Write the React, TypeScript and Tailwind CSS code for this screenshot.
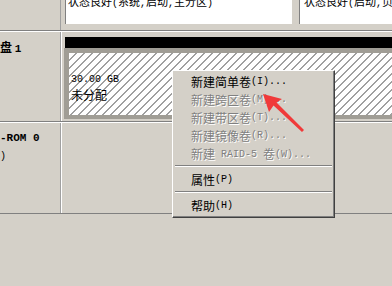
import React from "react";

const M = ({ children }: { children: React.ReactNode }) => (
  <span className="font-['Liberation_Mono',monospace] text-[10px]">{children}</span>
);

const Item = ({ label, hot, tail, disabled }: { label: string; hot: string; tail?: string; disabled?: boolean }) => (
  <div
    className={
      "h-[18px] pl-[18px] flex items-center whitespace-nowrap leading-[18px] " +
      (disabled ? "text-[#808080] [text-shadow:1px_1px_0_#ffffff]" : "text-black")
    }
  >
    <span>{label}</span>
    <M>({hot}){tail ?? ""}</M>
  </div>
);

const Sep = () => (
  <div className="h-[8px] pt-[2px] mx-[2px]">
    <div className="h-[1px] bg-[#808080]" />
    <div className="h-[1px] bg-white" />
  </div>
);

const RowSep = () => (
  <div className="h-[2px]">
    <div className="h-[1px] bg-[#808080]" />
    <div className="h-[1px] bg-white" />
  </div>
);

export default function App() {
  return (
    <div className="relative w-[392px] h-[286px] overflow-hidden bg-[#d4d0c8] text-[12px] text-black font-['Noto_Sans_CJK_SC',sans-serif]">
      {/* Row 1 */}
      <div className="flex h-[30px]">
        <div className="w-[61px] shrink-0 border-r border-[#a0a0a0]" />
        <div className="w-[1px] bg-white" />
        <div className="flex-1 flex pl-[4px] pb-[6px]">
          <div className="w-[227px] h-[24px] bg-white border-l border-[#808080] overflow-hidden">
            <div className="mt-[-6px] pl-[2px] whitespace-nowrap leading-[14px] text-[11px]">
              状态良好<M>(</M>系统<M>,</M>启动<M>,</M>主分区<M>)</M>
            </div>
          </div>
          <div className="w-[7px]" />
          <div className="flex-1 h-[24px] bg-white border-l border-[#808080] overflow-hidden">
            <div className="mt-[-6px] pl-[4px] whitespace-nowrap leading-[14px] text-[11px]">
              状态良好<M>(</M>启动<M>,</M>页面文件
            </div>
          </div>
        </div>
      </div>
      <RowSep />

      {/* Row 2 */}
      <div className="flex h-[89px]">
        <div className="w-[61px] shrink-0 border-r border-[#a0a0a0] overflow-hidden">
          <div className="ml-[-12px] pt-[8px] font-bold whitespace-nowrap leading-[14px]">
            磁盘 <span className="font-['Liberation_Mono',monospace] text-[11px] font-bold">1</span>
          </div>
        </div>
        <div className="w-[1px] bg-white" />
        <div className="flex-1 pl-[2px] pt-[5px] flex flex-col">
          <div className="h-[11px] ml-[1px] bg-black" />
          <div className="border-l-[5px] border-t-[5px] border-b-[4px] border-[#a09d95]">
            <div className="h-[62px] pl-[2px] pt-[16px] leading-[15px] bg-[repeating-linear-gradient(135deg,#ffffff_0px,#ffffff_4.66px,#a0a0a0_4.66px,#a0a0a0_5.66px)]">
              <div>
                <M>30.00 GB</M>
              </div>
              <div>未分配</div>
            </div>
          </div>
        </div>
      </div>
      <RowSep />

      {/* Row 3 */}
      <div className="flex h-[91px] border-b border-[#808080]">
        <div className="w-[61px] shrink-0 border-r border-[#a0a0a0] overflow-hidden">
          <div className="pt-[8px] leading-[15px] whitespace-nowrap">
            <div className="font-bold font-['Liberation_Mono',monospace] text-[11px]">-ROM 0</div>
            <div>
              <M>)</M>
            </div>
          </div>
        </div>
        <div className="w-[1px] bg-white" />
        <div className="flex-1" />
      </div>

      {/* Context menu */}
      <div className="absolute left-[172px] top-[70px] w-[163px] h-[148px] bg-[#d4d0c8] border-l border-t border-white border-r border-b border-r-[#404040] border-b-[#404040] shadow-[inset_-1px_-1px_0_#808080] pt-[2px]">
        <Item label="新建简单卷" hot="I" tail="..." />
        <Item label="新建跨区卷" hot="M" tail="..." disabled />
        <Item label="新建带区卷" hot="T" tail="..." disabled />
        <Item label="新建镜像卷" hot="R" tail="..." disabled />
        <div className="h-[18px] pl-[18px] flex items-center whitespace-nowrap text-[#808080] [text-shadow:1px_1px_0_#ffffff]">
          <span>新建</span>
          <M>&nbsp;RAID-5&nbsp;</M>
          <span>卷</span>
          <M>(W)...</M>
        </div>
        <Sep />
        <Item label="属性" hot="P" />
        <Sep />
        <Item label="帮助" hot="H" />
      </div>

      {/* Red arrow */}
      <svg className="absolute left-0 top-0 pointer-events-none" width="392" height="286" viewBox="0 0 392 286">
        <polygon
          points="263,94 282,99 276.5,102.5 304,130 302,132 273.5,105.5 269,112"
          fill="#f03a3a"
        />
      </svg>
    </div>
  );
}
